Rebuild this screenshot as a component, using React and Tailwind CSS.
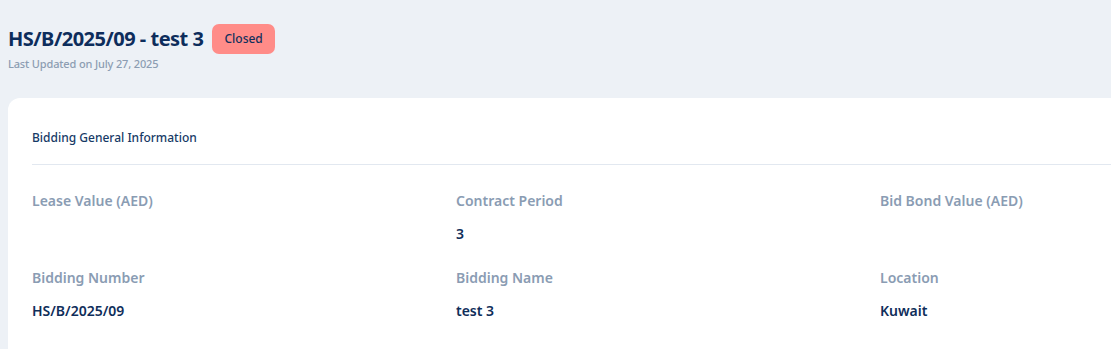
import React from "react";

const fields = [
  { label: "Lease Value (AED)", value: "" },
  { label: "Contract Period", value: "3" },
  { label: "Bid Bond Value (AED)", value: "" },
  { label: "Bidding Number", value: "HS/B/2025/09" },
  { label: "Bidding Name", value: "test 3" },
  { label: "Location", value: "Kuwait" },
  { label: "Publish Date", value: "" },
  { label: "Closing Date", value: "" },
  { label: "Submission Date", value: "" },
];

export default function App() {
  return (
    <div
      className="w-full h-[349px] overflow-hidden bg-[#edf1f6]"
      style={{ fontFamily: "'Noto Sans', sans-serif" }}
    >
      <div className="w-[1400px]">
        <div className="px-2 pt-6">
          <div className="flex items-center gap-[9px]">
            <h1 className="text-[20px] leading-[30px] font-bold text-[#0d2d5c] tracking-[-0.5px]">
              HS/B/2025/09 - test 3
            </h1>
            <span className="h-[30px] px-[12px] flex items-center rounded-[7px] bg-[#ff8c88] text-[12px] font-medium text-[#11305c]">
              Closed
            </span>
          </div>
          <p className="mt-[3px] text-[11px] leading-[14px] font-medium tracking-[-0.15px] text-[#8c9db2]">
            Last Updated on July 27, 2025
          </p>
        </div>

        <div className="ml-2 mt-[27px] bg-white rounded-tl-[12px] h-[400px]">
          <div className="px-6 pt-[30px]">
            <div className="text-[12px] leading-[20px] font-medium text-[#163a66] pb-[16px] border-b border-[#e2e8f0]">
              Bidding General Information
            </div>
            <div className="grid grid-cols-3 w-[1272px] pt-[26px] gap-y-[24px]">
              {fields.map((f) => (
                <div key={f.label} className="flex flex-col gap-[13px]">
                  <div className="text-[14px] leading-[20px] font-semibold text-[#8a9cb3]">
                    {f.label}
                  </div>
                  <div className="min-h-[20px] text-[14px] leading-[20px] font-semibold text-[#0f2e5a]">
                    {f.value}
                  </div>
                </div>
              ))}
            </div>
          </div>
        </div>
      </div>
    </div>
  );
}
